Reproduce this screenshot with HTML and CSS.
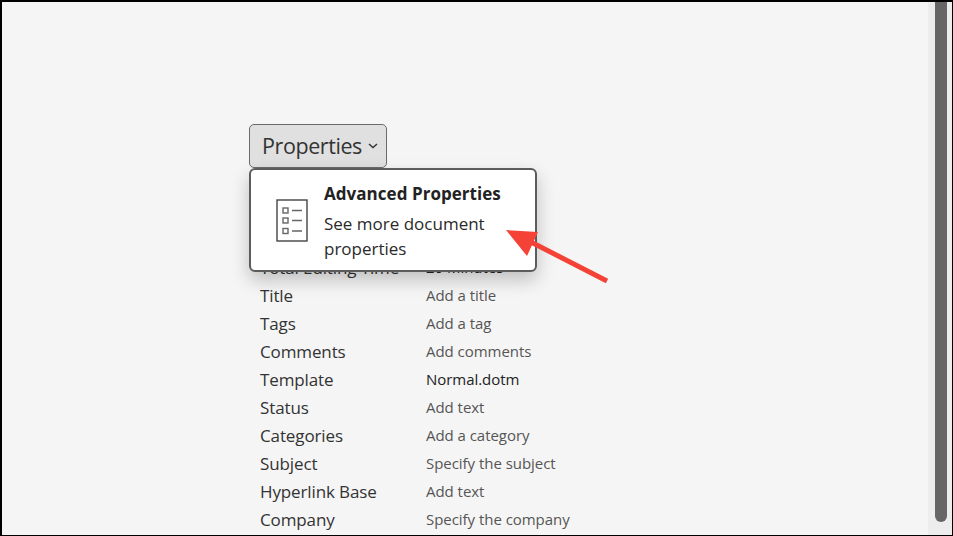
FILE: index.html
```html
<!DOCTYPE html>
<html lang="en">
<head>
<meta charset="utf-8">
<title>Properties</title>
<link rel="stylesheet" href="styles.css">
</head>
<body>
<div class="window">
  <main class="content">
    <div class="panel">
      <button class="prop-btn">Properties
        <svg class="chev" width="10" height="6" viewBox="0 0 10 6"><path d="M1 1l4 3.6L9 1" fill="none" stroke="#333" stroke-width="1.4"/></svg>
      </button>
      <div class="menu">
        <svg class="menu-icon" width="33" height="43" viewBox="0 0 33 43">
          <rect x="1" y="1" width="30" height="41" fill="none" stroke="#444" stroke-width="1.4"/>
          <g fill="none" stroke="#666" stroke-width="1.4">
            <rect x="7" y="9" width="5" height="5"/><rect x="7" y="19" width="5" height="5"/><rect x="7" y="29.500" width="5" height="5"/>
            <path d="M16 11.500h10M16 21.500h10M16 32h10"/>
          </g>
        </svg>
        <div class="menu-text">
          <div class="menu-title">Advanced Properties</div>
          <div class="menu-desc">See more document properties</div>
        </div>
      </div>
      <dl class="rows">
        <div class="row"><dt>Total Editing Time</dt><dd class="val">20 Minutes</dd></div>
        <div class="row"><dt>Title</dt><dd>Add a title</dd></div>
        <div class="row"><dt>Tags</dt><dd>Add a tag</dd></div>
        <div class="row"><dt>Comments</dt><dd>Add comments</dd></div>
        <div class="row"><dt>Template</dt><dd class="val">Normal.dotm</dd></div>
        <div class="row"><dt>Status</dt><dd>Add text</dd></div>
        <div class="row"><dt>Categories</dt><dd>Add a category</dd></div>
        <div class="row"><dt>Subject</dt><dd>Specify the subject</dd></div>
        <div class="row"><dt>Hyperlink Base</dt><dd>Add text</dd></div>
        <div class="row"><dt>Company</dt><dd>Specify the company</dd></div>
      </dl>
    </div>
  </main>
  <div class="scrollbar"><div class="thumb"></div></div>
  <svg class="arrow" width="953" height="536" viewBox="0 0 953 536">
    <path d="M607 281L527 240" stroke="#f44336" stroke-width="5" fill="none"/>
    <path d="M506 230L538 232L527 256Z" fill="#f44336"/>
  </svg>
</div>
</body>
</html>
```
FILE: styles.css
```css
* { box-sizing: border-box; }
html, body { margin: 0; height: 100%; overflow: hidden; }
body { font-family: "Open Sans", "Noto Sans", sans-serif; color: #262626; }
.window {
  position: relative;
  width: 953px;
  height: 536px;
  display: flex;
  border: solid #000;
  border-width: 2px 1px 1px 2px;
  background: #f5f5f5;
  overflow: hidden;
}
.content { flex: 1; min-width: 0; padding: 122px 0 0 247px; overflow: hidden; }
.panel { position: relative; }
.prop-btn {
  display: flex;
  align-items: center;
  gap: 6px;
  width: 138px;
  height: 44px;
  padding: 0 0 0 12px;
  background: #e0e0e0;
  border: 1px solid #6b6b6b;
  border-radius: 5px;
  font: 21.500px/1 "Open Sans", sans-serif;
  letter-spacing: -0.42px;
  color: #333;
}
.menu {
  position: absolute;
  left: 0;
  top: 44px;
  width: 288px;
  height: 104px;
  display: flex;
  align-items: flex-start;
  background: #fff;
  border: 2px solid #5c5c5c;
  border-radius: 6px;
  box-shadow: 0 8px 18px rgba(0,0,0,.22);
  z-index: 2;
}
.menu-icon { margin: 29px 0 0 25px; flex: none; }
.menu-text { margin: 12px 0 0 15px; width: 190px; }
.menu-title { font-size: 17px; font-weight: 700; line-height: 24px; letter-spacing: 0.04px; color: #222; }
.menu-desc { font-size: 17px; line-height: 25px; margin-top: 5px; letter-spacing: 0; color: #2a2a2a; }
.rows { margin: 85px 0 0 11px; padding: 0; }
.row { display: flex; height: 28px; align-items: center; }
dt { width: 166px; font-size: 17px; letter-spacing: -0.12px; color: #333; }
dd { margin: 0; font-size: 15px; letter-spacing: -0.04px; color: #555; }
dd.val { color: #222; }
.scrollbar { flex: none; width: 24px; background: #ededed; padding-left: 7px; }
.thumb { width: 12px; height: 520px; background: #666; border-radius: 0 0 6px 6px; }
.arrow { position: absolute; left: -2px; top: -2px; z-index: 3; pointer-events: none; }
```
